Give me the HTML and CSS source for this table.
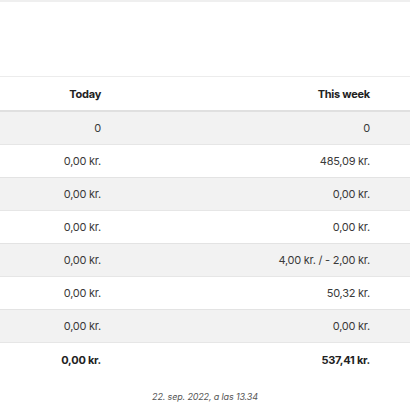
FILE: index.html
```html
<!DOCTYPE html>
<html>
<head>
<meta charset="utf-8">
<link rel="stylesheet" href="styles.css">
</head>
<body>
<div class="topbar"></div>
<div class="spacer"></div>
<div class="table">
  <div class="row head">
    <div class="cell"></div>
    <div class="cell">Today</div>
    <div class="cell">This week</div>
    <div class="cell"></div>
  </div>
  <div class="row odd"><div class="cell"></div><div class="cell">0</div><div class="cell">0</div><div class="cell"></div></div>
  <div class="row"><div class="cell"></div><div class="cell">0,00 kr.</div><div class="cell">485,09 kr.</div><div class="cell"></div></div>
  <div class="row odd"><div class="cell"></div><div class="cell">0,00 kr.</div><div class="cell">0,00 kr.</div><div class="cell"></div></div>
  <div class="row"><div class="cell"></div><div class="cell">0,00 kr.</div><div class="cell">0,00 kr.</div><div class="cell"></div></div>
  <div class="row odd"><div class="cell"></div><div class="cell">0,00 kr.</div><div class="cell">4,00 kr. / - 2,00 kr.</div><div class="cell"></div></div>
  <div class="row"><div class="cell"></div><div class="cell">0,00 kr.</div><div class="cell">50,32 kr.</div><div class="cell"></div></div>
  <div class="row odd"><div class="cell"></div><div class="cell">0,00 kr.</div><div class="cell">0,00 kr.</div><div class="cell"></div></div>
  <div class="row total"><div class="cell"></div><div class="cell">0,00 kr.</div><div class="cell">537,41 kr.</div><div class="cell"></div></div>
</div>
<p class="stamp">22. sep. 2022, a las 13.34</p>
</body>
</html>
```
FILE: styles.css
```css
html, body {
  margin: 0;
  padding: 0;
  background: #fff;
  font-family: Inter, "Liberation Sans", sans-serif;
  font-size: 11px;
  letter-spacing: -0.25px;
  color: #3a3a3a;
}
.topbar {
  height: 2px;
  background: #efefef;
}
.spacer {
  height: 74px;
}
.table {
  width: 410px;
}
.row {
  display: grid;
  grid-template-columns: 1px 108px 269px 32px;
  height: 33px;
  border-top: 1px solid #e6e6e6;
  box-sizing: border-box;
}
.row.head {
  height: 34px;
  border-top: 1px solid #ececec;
  font-weight: 700;
  color: #222;
}
.row.odd {
  background: #f2f2f2;
  border-top: 1px solid #e3e3e3;
}
.row.head + .row {
  border-top: 2px solid #e0e0e0;
  height: 34px;
}
.row.total {
  font-weight: 700;
  color: #222;
  height: 34px;
}
.cell {
  display: flex;
  align-items: center;
  justify-content: flex-end;
  padding-right: 8px;
}
.cell:first-child, .cell:last-child {
  padding: 0;
}
.stamp {
  margin: 15px 0 0;
  text-align: center;
  font-size: 9px;
  letter-spacing: -0.15px;
  font-style: italic;
  color: #555;
}
```
